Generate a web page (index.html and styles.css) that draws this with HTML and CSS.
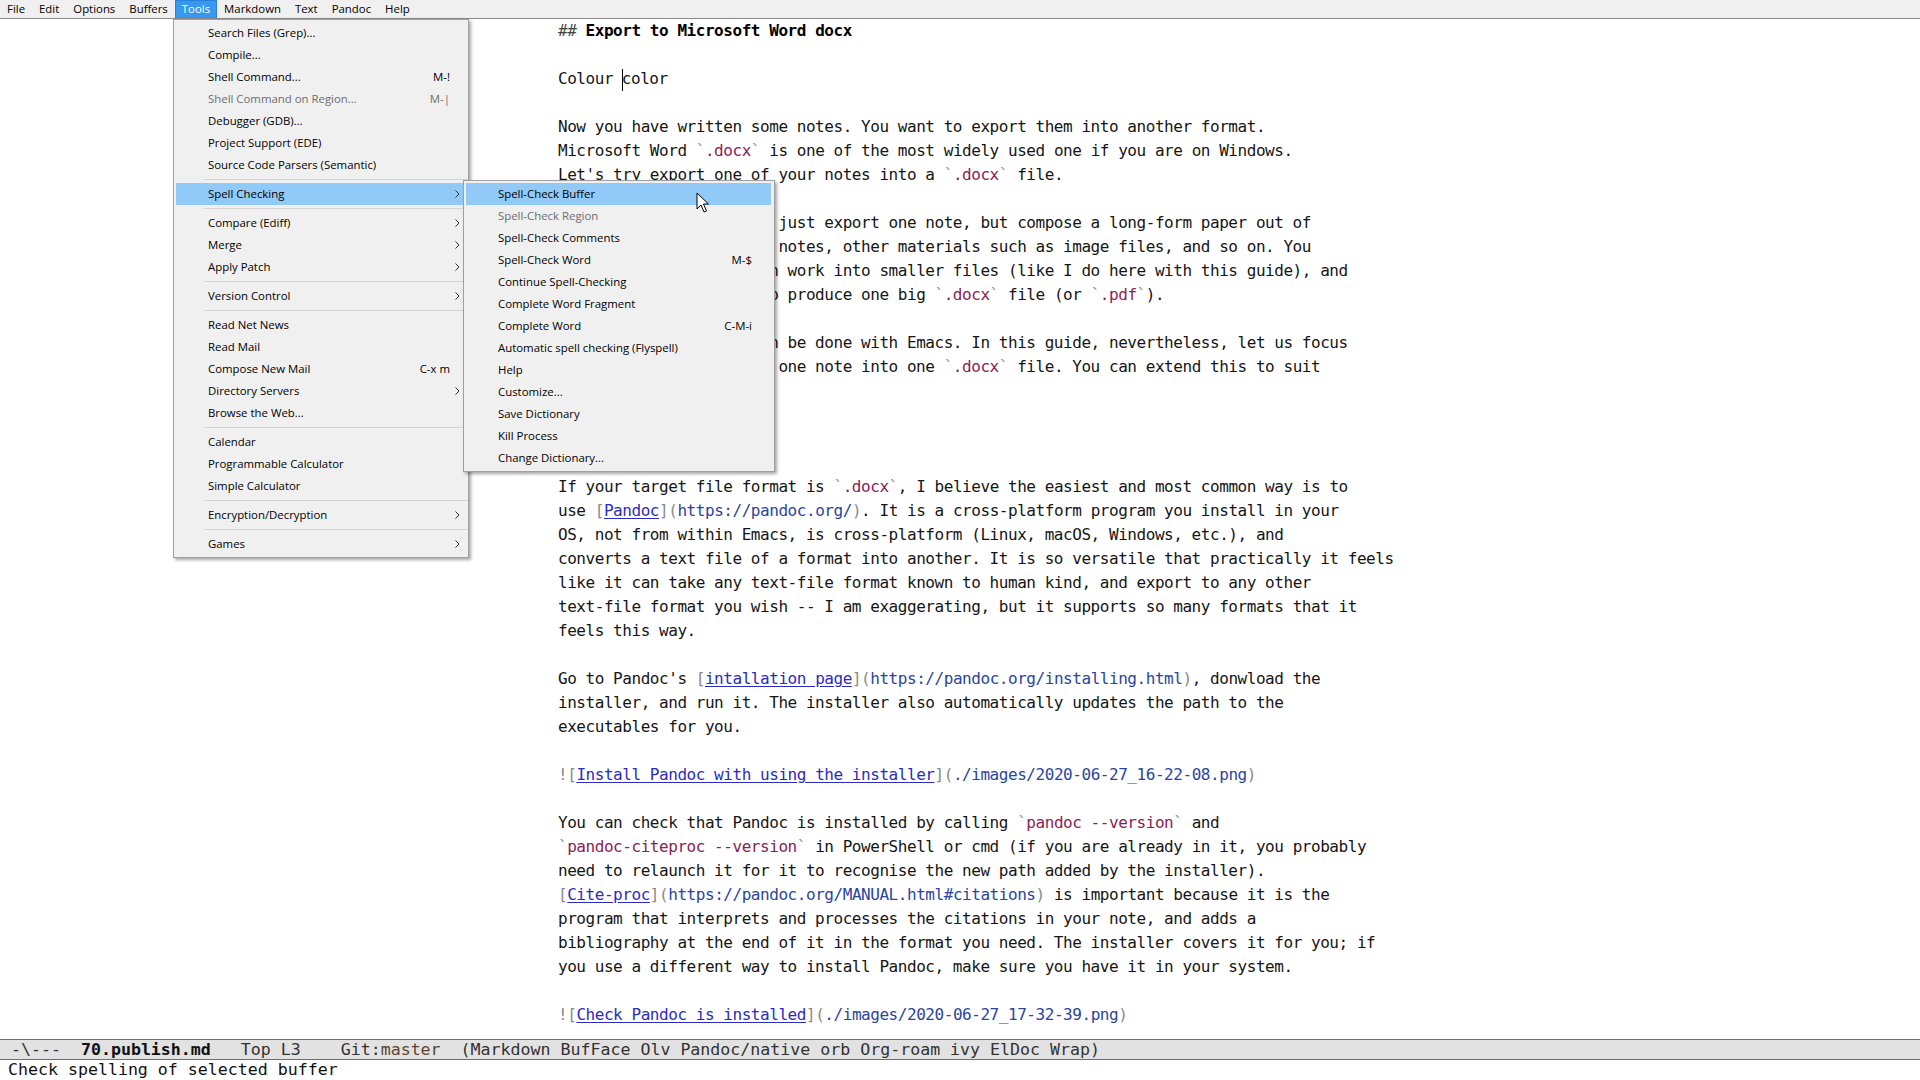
FILE: index.html
```html
<!DOCTYPE html>
<html lang="en">
<head>
<meta charset="utf-8">
<title>Emacs - 70.publish.md</title>
<link rel="stylesheet" href="styles.css">
</head>
<body>
<div class="frame">
  <nav class="menubar">
    <span class="mb-item">File</span>
    <span class="mb-item">Edit</span>
    <span class="mb-item">Options</span>
    <span class="mb-item">Buffers</span>
    <span class="mb-item mb-open">Tools</span>
    <span class="mb-item">Markdown</span>
    <span class="mb-item">Text</span>
    <span class="mb-item">Pandoc</span>
    <span class="mb-item">Help</span>
  </nav>

  <main class="buffer">
    <div class="text">
      <div class="ln"><span class="hdelim">## </span><span class="hbold">Export to Microsoft Word docx</span></div>
      <div class="ln"></div>
      <div class="ln">Colour <span class="caret"></span>color</div>
      <div class="ln"></div>
      <div class="ln">Now you have written some notes. You want to export them into another format.</div>
      <div class="ln">Microsoft Word <span class="tick">`</span><span class="code">.docx</span><span class="tick">`</span> is one of the most widely used one if you are on Windows.</div>
      <div class="ln">Let's try export one of your notes into a <span class="tick">`</span><span class="code">.docx</span><span class="tick">`</span> file.</div>
      <div class="ln"></div>
      <div class="ln"><span class="in22">t just export one note, but compose a long-form paper out of</span></div>
      <div class="ln"><span class="in24">notes, other materials such as image files, and so on. You</span></div>
      <div class="ln"><span class="in23">n work into smaller files (like I do here with this guide), and</span></div>
      <div class="ln"><span class="in23">o produce one big <span class="tick">`</span><span class="code">.docx</span><span class="tick">`</span> file (or <span class="tick">`</span><span class="code">.pdf</span><span class="tick">`</span>).</span></div>
      <div class="ln"></div>
      <div class="ln"><span class="in23">n be done with Emacs. In this guide, nevertheless, let us focus</span></div>
      <div class="ln"><span class="in24">one note into one <span class="tick">`</span><span class="code">.docx</span><span class="tick">`</span> file. You can extend this to suit</span></div>
      <div class="ln"></div>
      <div class="ln"></div>
      <div class="ln"></div>
      <div class="ln"></div>
      <div class="ln">If your target file format is <span class="tick">`</span><span class="code">.docx</span><span class="tick">`</span>, I believe the easiest and most common way is to</div>
      <div class="ln">use <span class="br">[</span><span class="lk">Pandoc</span><span class="br">](</span><span class="url">https://pandoc.org/</span><span class="br">)</span>. It is a cross-platform program you install in your</div>
      <div class="ln">OS, not from within Emacs, is cross-platform (Linux, macOS, Windows, etc.), and</div>
      <div class="ln">converts a text file of a format into another. It is so versatile that practically it feels</div>
      <div class="ln">like it can take any text-file format known to human kind, and export to any other</div>
      <div class="ln">text-file format you wish -- I am exaggerating, but it supports so many formats that it</div>
      <div class="ln">feels this way.</div>
      <div class="ln"></div>
      <div class="ln">Go to Pandoc's <span class="br">[</span><span class="lk">intallation page</span><span class="br">](</span><span class="url">https://pandoc.org/installing.html</span><span class="br">)</span>, donwload the</div>
      <div class="ln">installer, and run it. The installer also automatically updates the path to the</div>
      <div class="ln">executables for you.</div>
      <div class="ln"></div>
      <div class="ln"><span class="br">![</span><span class="lk">Install Pandoc with using the installer</span><span class="br">](</span><span class="url">./images/2020-06-27_16-22-08.png</span><span class="br">)</span></div>
      <div class="ln"></div>
      <div class="ln">You can check that Pandoc is installed by calling <span class="tick">`</span><span class="code">pandoc --version</span><span class="tick">`</span> and</div>
      <div class="ln"><span class="tick">`</span><span class="code">pandoc-citeproc --version</span><span class="tick">`</span> in PowerShell or cmd (if you are already in it, you probably</div>
      <div class="ln">need to relaunch it for it to recognise the new path added by the installer).</div>
      <div class="ln"><span class="br">[</span><span class="lk">Cite-proc</span><span class="br">](</span><span class="url">https://pandoc.org/MANUAL.html#citations</span><span class="br">)</span> is important because it is the</div>
      <div class="ln">program that interprets and processes the citations in your note, and adds a</div>
      <div class="ln">bibliography at the end of it in the format you need. The installer covers it for you; if</div>
      <div class="ln">you use a different way to install Pandoc, make sure you have it in your system.</div>
      <div class="ln"></div>
      <div class="ln"><span class="br">![</span><span class="lk">Check Pandoc is installed</span><span class="br">](</span><span class="url">./images/2020-06-27_17-32-39.png</span><span class="br">)</span></div>
    </div>
  </main>

  <footer class="modeline"> -\---  <b>70.publish.md</b>   Top L3    Git:<span class="branch">master</span>  (Markdown BufFace Olv Pandoc/native orb Org-roam ivy ElDoc Wrap)</footer>
  <div class="echo">Check spelling of selected buffer</div>
</div>

<!-- Tools drop-down -->
<div class="menu tools-menu">
  <div class="mi"><span class="lbl">Search Files (Grep)...</span></div>
  <div class="mi"><span class="lbl">Compile...</span></div>
  <div class="mi"><span class="lbl">Shell Command...</span><span class="key">M-!</span></div>
  <div class="mi dis"><span class="lbl">Shell Command on Region...</span><span class="key">M-|</span></div>
  <div class="mi"><span class="lbl">Debugger (GDB)...</span></div>
  <div class="mi"><span class="lbl">Project Support (EDE)</span></div>
  <div class="mi"><span class="lbl">Source Code Parsers (Semantic)</span></div>
  <div class="sep"></div>
  <div class="mi hl"><span class="lbl">Spell Checking</span><span class="arr"><svg width="5" height="8" viewBox="0 0 5 8"><path d="M0.5 0.5 L4 4 L0.5 7.5" fill="none" stroke="#333" stroke-width="1"/></svg></span></div>
  <div class="sep"></div>
  <div class="mi"><span class="lbl">Compare (Ediff)</span><span class="arr"><svg width="5" height="8" viewBox="0 0 5 8"><path d="M0.5 0.5 L4 4 L0.5 7.5" fill="none" stroke="#333" stroke-width="1"/></svg></span></div>
  <div class="mi"><span class="lbl">Merge</span><span class="arr"><svg width="5" height="8" viewBox="0 0 5 8"><path d="M0.5 0.5 L4 4 L0.5 7.5" fill="none" stroke="#333" stroke-width="1"/></svg></span></div>
  <div class="mi"><span class="lbl">Apply Patch</span><span class="arr"><svg width="5" height="8" viewBox="0 0 5 8"><path d="M0.5 0.5 L4 4 L0.5 7.5" fill="none" stroke="#333" stroke-width="1"/></svg></span></div>
  <div class="sep"></div>
  <div class="mi"><span class="lbl">Version Control</span><span class="arr"><svg width="5" height="8" viewBox="0 0 5 8"><path d="M0.5 0.5 L4 4 L0.5 7.5" fill="none" stroke="#333" stroke-width="1"/></svg></span></div>
  <div class="sep"></div>
  <div class="mi"><span class="lbl">Read Net News</span></div>
  <div class="mi"><span class="lbl">Read Mail</span></div>
  <div class="mi"><span class="lbl">Compose New Mail</span><span class="key">C-x m</span></div>
  <div class="mi"><span class="lbl">Directory Servers</span><span class="arr"><svg width="5" height="8" viewBox="0 0 5 8"><path d="M0.5 0.5 L4 4 L0.5 7.5" fill="none" stroke="#333" stroke-width="1"/></svg></span></div>
  <div class="mi"><span class="lbl">Browse the Web...</span></div>
  <div class="sep"></div>
  <div class="mi"><span class="lbl">Calendar</span></div>
  <div class="mi"><span class="lbl">Programmable Calculator</span></div>
  <div class="mi"><span class="lbl">Simple Calculator</span></div>
  <div class="sep"></div>
  <div class="mi"><span class="lbl">Encryption/Decryption</span><span class="arr"><svg width="5" height="8" viewBox="0 0 5 8"><path d="M0.5 0.5 L4 4 L0.5 7.5" fill="none" stroke="#333" stroke-width="1"/></svg></span></div>
  <div class="sep"></div>
  <div class="mi"><span class="lbl">Games</span><span class="arr"><svg width="5" height="8" viewBox="0 0 5 8"><path d="M0.5 0.5 L4 4 L0.5 7.5" fill="none" stroke="#333" stroke-width="1"/></svg></span></div>
</div>

<!-- Spell Checking submenu -->
<div class="menu spell-menu">
  <div class="mi hl"><span class="lbl">Spell-Check Buffer</span></div>
  <div class="mi dis"><span class="lbl">Spell-Check Region</span></div>
  <div class="mi"><span class="lbl">Spell-Check Comments</span></div>
  <div class="mi"><span class="lbl">Spell-Check Word</span><span class="key">M-$</span></div>
  <div class="mi"><span class="lbl">Continue Spell-Checking</span></div>
  <div class="mi"><span class="lbl">Complete Word Fragment</span></div>
  <div class="mi"><span class="lbl">Complete Word</span><span class="key">C-M-i</span></div>
  <div class="mi"><span class="lbl">Automatic spell checking (Flyspell)</span></div>
  <div class="mi"><span class="lbl">Help</span></div>
  <div class="mi"><span class="lbl">Customize...</span></div>
  <div class="mi"><span class="lbl">Save Dictionary</span></div>
  <div class="mi"><span class="lbl">Kill Process</span></div>
  <div class="mi"><span class="lbl">Change Dictionary...</span></div>
</div>

<!-- mouse pointer -->
<svg class="pointer" width="14" height="22" viewBox="0 0 14 22">
  <path d="M1 1 L1 17 L5 13 L8 20 L10.5 19 L7.5 12 L12.5 12 Z" fill="#fff" stroke="#000" stroke-width="1" stroke-linejoin="miter"/>
</svg>
</body>
</html>
```

FILE: styles.css
```css
html, body {
  margin: 0;
  padding: 0;
  width: 1920px;
  height: 1080px;
  overflow: hidden;
  background: #ffffff;
}

.frame {
  width: 1920px;
  height: 1080px;
  display: flex;
  flex-direction: column;
}

/* ---------- menu bar ---------- */
.menubar {
  height: 18px;
  flex: 0 0 18px;
  display: flex;
  align-items: stretch;
  background: #f0f0f0;
  border-bottom: 1px solid #8a8a8a;
  font-family: "Open Sans", "Noto Sans", sans-serif;
  font-size: 11.4px;
  color: #000;
}
.mb-item {
  padding: 0 6px;
  line-height: 16px;
  border: 1px solid transparent;
  border-bottom: 0;
}
.mb-open {
  background: #3897ef;
  border-color: #2a82d8;
  color: #fff;
}

/* ---------- buffer ---------- */
.buffer {
  flex: 1 1 auto;
  overflow: hidden;
  background: #fff;
}
.text {
  padding-left: 558px;
  font-family: "DejaVu Sans Mono", "Liberation Mono", monospace;
  font-size: 16px;
  letter-spacing: -0.45px;
  color: #151515;
}
.ln {
  height: 24px;
  line-height: 24px;
  white-space: pre;
}
/* continuation of lines whose start is hidden under the open menu */
.in22 { margin-left: calc(22ch - 9.9px); }
.in23 { margin-left: calc(23ch - 10.35px); }
.in24 { margin-left: calc(24ch - 10.8px); }

.hdelim { color: #444; }
.hbold { font-weight: bold; color: #000; }
.tick { color: #8a8a8a; }
.code { color: #8b2252; }
.br { color: #8a8a8a; }
.lk { color: #2b2bc4; text-decoration: underline; text-underline-offset: 2px; }
.url { color: #2a45a0; }
.caret {
  display: inline-block;
  width: 0;
  height: 22px;
  border-left: 1.5px solid #000;
  vertical-align: middle;
  margin-right: -1.5px;
}

/* ---------- mode line / echo ---------- */
.modeline {
  flex: 0 0 19px;
  height: 19px;
  line-height: 19px;
  background: #e2e2e2;
  border-top: 1px solid #6e6e6e;
  border-bottom: 1px solid #6e6e6e;
  white-space: pre;
  font-family: "DejaVu Sans Mono", monospace;
  font-size: 16.6px;
  color: #333;
  padding-left: 1px;
}
.modeline b { color: #111; }
.branch { color: #5c4630; }
.echo {
  flex: 0 0 20px;
  height: 20px;
  line-height: 20px;
  white-space: pre;
  font-family: "DejaVu Sans Mono", monospace;
  font-size: 16.6px;
  color: #111;
  padding-left: 8px;
}

/* ---------- drop-down menus ---------- */
.menu {
  position: absolute;
  background: #f0f0f0;
  border: 1px solid #a0a0a0;
  box-shadow: 2px 2px 3px rgba(0, 0, 0, 0.35);
  padding: 2px 0;
  font-family: "Open Sans", "Noto Sans", sans-serif;
  font-size: 11.4px;
  color: #000;
}
.tools-menu {
  left: 173px;
  top: 19px;
  width: 294px;
}
.spell-menu {
  left: 463px;
  top: 180px;
  width: 310px;
}
.mi {
  height: 22px;
  line-height: 22px;
  margin: 0 3px 0 2px;
  padding-left: 32px;
  display: flex;
  align-items: center;
  white-space: nowrap;
}
.mi .lbl { flex: 1 1 auto; }
.mi .key { padding-right: 15px; }
.spell-menu .mi .key { padding-right: 19px; }
.mi .arr {
  width: 15px;
  display: flex;
  justify-content: center;
  align-items: center;
}
.mi.hl { background: #91c9f7; }
.mi.dis { color: #6d6d6d; }
.sep {
  height: 7px;
  margin-left: 30px;
  display: flex;
  align-items: center;
}
.sep::before {
  content: "";
  flex: 1;
  border-top: 1px solid #d4d4d4;
}

.pointer {
  position: absolute;
  left: 696px;
  top: 192px;
}
```
